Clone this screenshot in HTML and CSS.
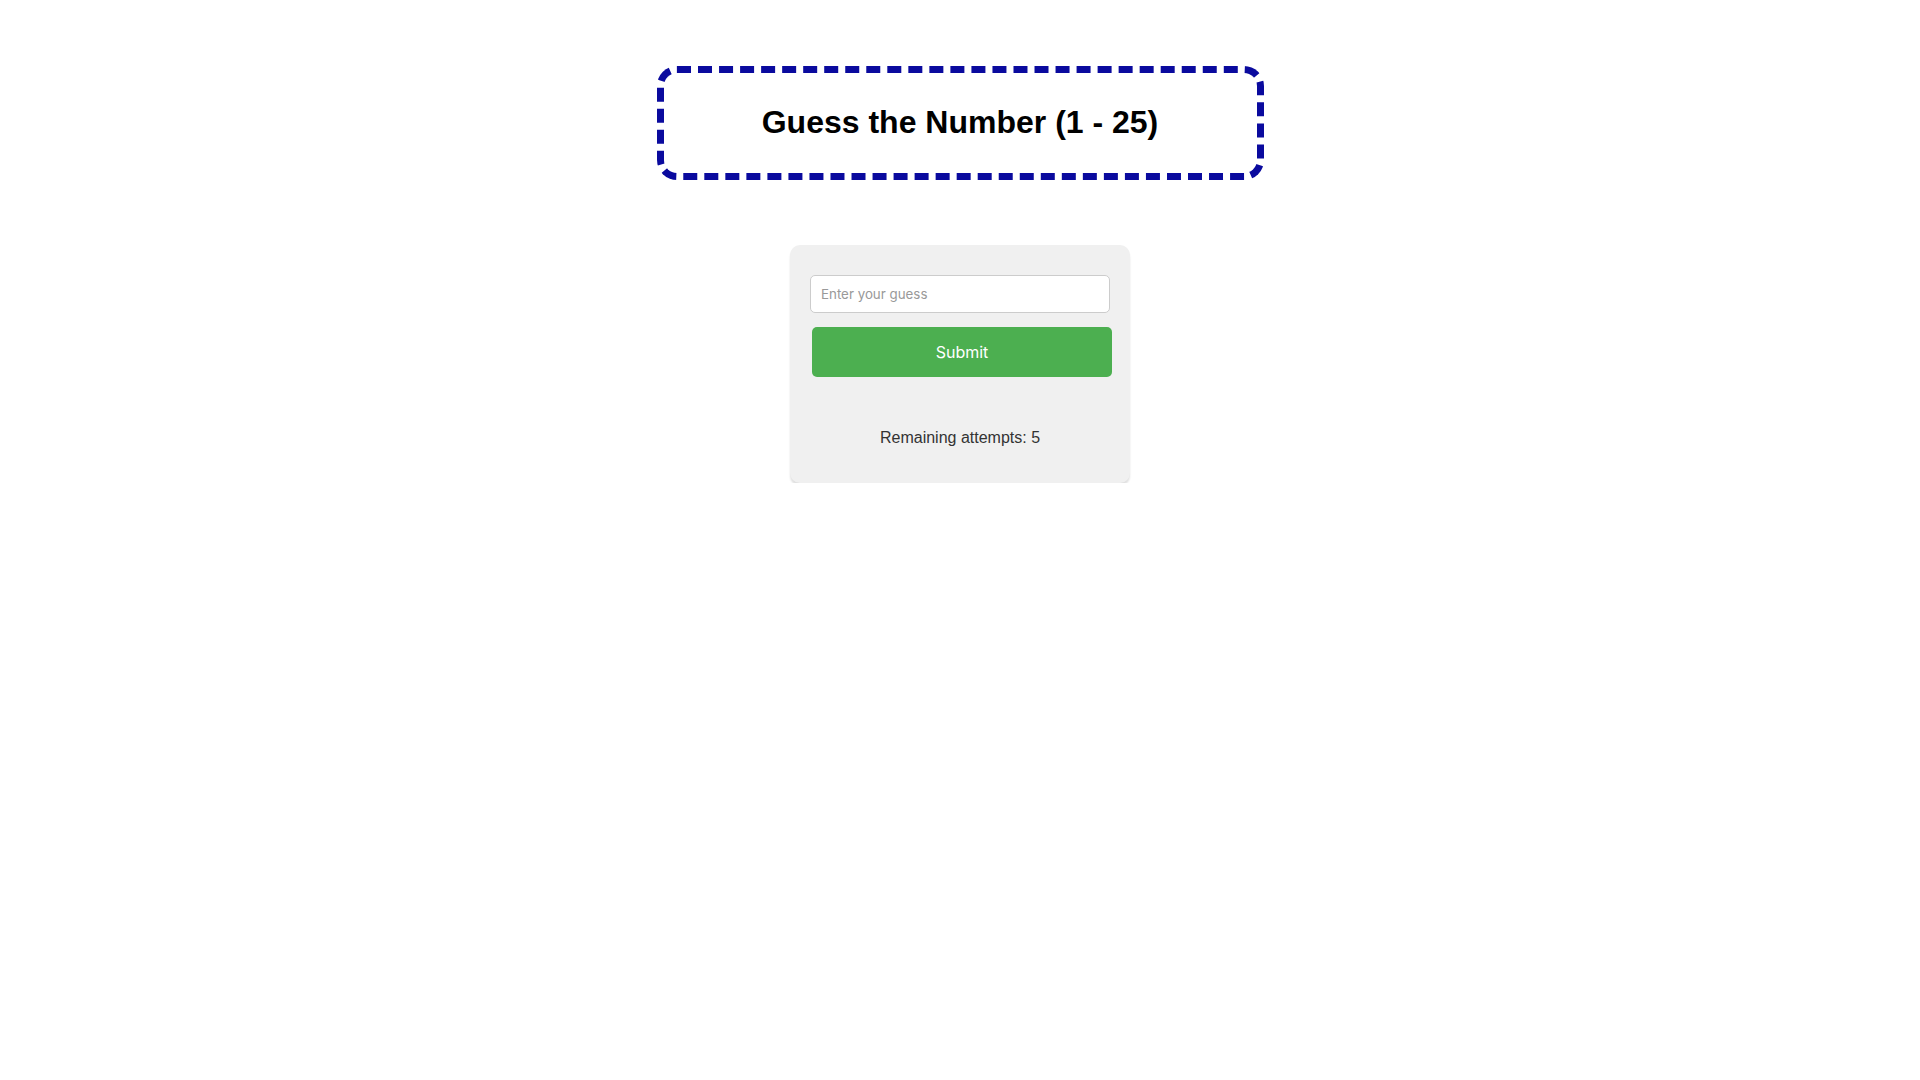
FILE: index.html
```html
<!DOCTYPE html>
<html lang="en">
<head>
    <meta charset="UTF-8">
    <meta name="viewport" content="width=device-width, initial-scale=1.0">
    <title>Guess the Number</title>
    <link rel="stylesheet" href="styles.css">
</head>
<body>
    <div class="title-box">
        <h1>Guess the Number (1 - 25)</h1>
    </div>

    <div class="game">
        <input type="number" id="guess" placeholder="Enter your guess">
        <button id="btn-submit">Submit</button>
        <p id="message"></p>
        <p id="attempts">Remaining attempts: 5</p>
    </div>
</body>
</html>
```

FILE: styles.css
```css
* {
    box-sizing: border-box;
}
body {
    margin: 0;
    padding: 66px 0 0;
    background-color: #ffffff;
    font-family: 'Liberation Sans', Arial, sans-serif;
    text-align: center;
}
.title-box {
    width: 607px;
    margin: 0 auto;
    padding: 31px 10px 32px;
    border: 7px dashed #0a0a9e;
    border-radius: 20px;
}
h1 {
    margin: 0;
    font-size: 32px;
    font-weight: bold;
    color: #000000;
}
.game {
    width: 340px;
    margin: 65px auto 0;
    padding: 20px;
    background: #f0f0f0;
    border-radius: 10px;
    box-shadow: 0 3px 2px rgba(0, 0, 0, 0.12);
}
#guess {
    display: block;
    width: 300px;
    margin: 10px 0 0;
    padding: 10px;
    border: 1px solid #cccccc;
    border-radius: 5px;
    background: #ffffff;
    font-family: 'Inter', sans-serif;
    font-size: 13.33px;
    line-height: 16px;
    color: #333333;
    outline: none;
}
#guess::placeholder {
    color: #999999;
}
#btn-submit {
    display: block;
    width: 300px;
    height: 50px;
    margin: 14px 0 0 2px;
    border: none;
    border-radius: 5px;
    background: #4caf50;
    color: #ffffff;
    font-family: 'Inter', sans-serif;
    font-size: 16px;
    cursor: pointer;
}
#message {
    margin: 0;
    height: 0;
}
#attempts {
    margin: 52px 0 16px;
    font-size: 16px;
    line-height: 18px;
    color: #333333;
}
```
